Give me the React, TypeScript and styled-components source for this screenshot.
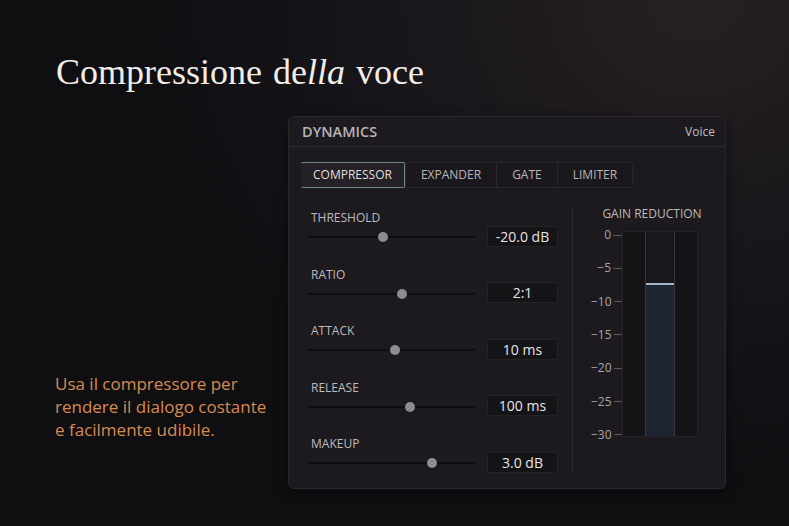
import styled, { createGlobalStyle } from "styled-components";

interface Control {
  label: string;
  value: string;
  position: number;
}

const controls: Control[] = [
  { label: "Threshold", value: "-20.0 dB", position: 0.45 },
  { label: "Ratio", value: "2:1", position: 0.56 },
  { label: "Attack", value: "10 ms", position: 0.52 },
  { label: "Release", value: "100 ms", position: 0.61 },
  { label: "Makeup", value: "3.0 dB", position: 0.74 },
];

const tabs = ["Compressor", "Expander", "Gate", "Limiter"];
const scale = ["0", "−5", "−10", "−15", "−20", "−25", "−30"];

// gain reduction currently shown on the meter, in dB
const reduction = 7;
const meterInner = 204;
const meterZeroOffset = 4;
const pxPerDb = 200 / 30;

export default function App() {
  const fillHeight = meterInner - (meterZeroOffset + reduction * pxPerDb);

  return (
    <>
      <GlobalStyle />
      <Page>
        <Title>
          Compressione de<em>lla</em> voce
        </Title>
        <Content>
          <Caption>
            Usa il compressore per
            <br />
            rendere il dialogo costante
            <br />e facilmente udibile.
          </Caption>

          <Panel>
            <Header>
              <PanelTitle>DYNAMICS</PanelTitle>
              <Preset>Voice</Preset>
            </Header>

            <Body>
              <Tabs>
                {tabs.map((tab, i) => (
                  <Tab key={tab} $active={i === 0}>
                    {tab}
                  </Tab>
                ))}
              </Tabs>

              <Controls>
                <LeftCol>
                  {controls.map((c) => (
                    <Row key={c.label}>
                      <Label>{c.label}</Label>
                      <SliderRow>
                        <Track>
                          <Thumb style={{ left: `${c.position * 100}%` }} />
                        </Track>
                        <ValueBox>{c.value}</ValueBox>
                      </SliderRow>
                    </Row>
                  ))}
                </LeftCol>

                <RightCol>
                  <GainLabel>Gain Reduction</GainLabel>
                  <MeterRow>
                    <Scale>
                      {scale.map((s) => (
                        <ScaleItem key={s}>
                          {s}
                          <Tick />
                        </ScaleItem>
                      ))}
                    </Scale>
                    <Meter>
                      <MeterSide />
                      <MeterMiddle>
                        <MeterFill style={{ height: fillHeight }} />
                      </MeterMiddle>
                      <MeterSide />
                    </Meter>
                  </MeterRow>
                </RightCol>
              </Controls>
            </Body>
          </Panel>
        </Content>
      </Page>
    </>
  );
}

const GlobalStyle = createGlobalStyle`
  body {
    margin: 0;
    background: #0f0e11;
  }
`;

const Page = styled.div`
  width: 789px;
  height: 526px;
  box-sizing: border-box;
  padding-top: 50px;
  overflow: hidden;
  background: radial-gradient(
    ellipse 70% 90% at 88% 0%,
    #252023 0%,
    #18161a 55%,
    #0f0e11 100%
  );
  font-family: "Open Sans", "Liberation Sans", sans-serif;
`;

const Title = styled.h1`
  margin: 0;
  padding-left: 56px;
  font-family: "Liberation Serif", serif;
  font-weight: 400;
  font-size: 36px;
  line-height: 44px;
  word-spacing: 2px;
  color: #f1ede8;

  em {
    font-style: italic;
  }
`;

const Content = styled.div`
  display: flex;
  margin-top: 22px;
`;

const Caption = styled.p`
  box-sizing: border-box;
  width: 288px;
  margin: 256px 0 0;
  padding-left: 55px;
  font-size: 17px;
  line-height: 23px;
  color: #d68b52;
`;

const Panel = styled.section`
  box-sizing: border-box;
  width: 438px;
  height: 373px;
  border: 1px solid #29272b;
  border-radius: 6px;
  background: #1c1a1e;
  box-shadow: 0 4px 14px rgba(0, 0, 0, 0.45);
`;

const Header = styled.header`
  display: flex;
  align-items: center;
  justify-content: space-between;
  height: 29px;
  padding: 0 10px 0 13px;
  border-bottom: 1px solid #2c2a2e;
`;

const PanelTitle = styled.h2`
  margin: 0;
  font-size: 14.5px;
  font-weight: 600;
  color: #b7b3b7;
`;

const Preset = styled.span`
  font-size: 12px;
  color: #c2bec2;
`;

const Body = styled.div`
  padding: 15px 12px 0;
`;

const Tabs = styled.div`
  display: inline-flex;
  height: 26px;
  box-sizing: border-box;
  border: 1px solid #29272b;
  border-radius: 3px;
  background: #1a181c;
`;

const Tab = styled.div<{ $active?: boolean }>`
  box-sizing: border-box;
  padding: 0 15px;
  font-size: 12px;
  line-height: 24px;
  text-transform: uppercase;
  color: ${(p) => (p.$active ? "#e2dede" : "#b9b5b9")};
  border-left: 1px solid #29272b;

  &:first-child {
    border-left: none;
  }

  ${(p) =>
    p.$active &&
    `
    margin: -1px 0 -1px -1px;
    padding: 0 12px;
    line-height: 24px;
    height: 26px;
    border: 1px solid #6b8a7c;
    border-radius: 2px;
    background: #232125;
  `}
`;

const Controls = styled.div`
  display: flex;
  margin-top: 20px;
  height: 264px;
`;

const LeftCol = styled.div`
  box-sizing: border-box;
  width: 272px;
  padding: 3px 0 0 7px;
  border-right: 1px solid #2c2a2e;
`;

const Row = styled.div`
  height: 56.5px;
`;

const Label = styled.div`
  padding-left: 3px;
  font-size: 12px;
  line-height: 14px;
  text-transform: uppercase;
  color: #bdb9bd;
`;

const SliderRow = styled.div`
  display: flex;
  align-items: center;
  height: 22px;
`;

const Track = styled.div`
  position: relative;
  width: 167px;
  height: 2px;
  margin: 2px 12px 0 0;
  background: #0e0d10;
`;

const Thumb = styled.span`
  position: absolute;
  top: 50%;
  width: 10px;
  height: 10px;
  border-radius: 50%;
  background: #8e8c90;
  transform: translate(-50%, -50%);
`;

const ValueBox = styled.div`
  box-sizing: border-box;
  width: 71px;
  height: 21px;
  border: 1px solid #242226;
  border-radius: 2px;
  background: #141315;
  font-size: 14px;
  line-height: 19px;
  text-align: center;
  color: #e8e4e8;
`;

const RightCol = styled.div`
  flex: 1;
  padding-left: 18px;
`;

const GainLabel = styled.div`
  font-size: 12px;
  line-height: 12px;
  text-align: center;
  text-transform: uppercase;
  color: #bdb9bd;
`;

const MeterRow = styled.div`
  display: flex;
  align-items: flex-start;
  margin-top: 8px;
`;

const Scale = styled.div`
  display: flex;
  flex-direction: column;
  justify-content: space-between;
  width: 31px;
  height: 214px;
`;

const ScaleItem = styled.div`
  display: flex;
  align-items: center;
  justify-content: flex-end;
  height: 14px;
  font-size: 12px;
  line-height: 14px;
  color: #a9a5a9;
`;

const Tick = styled.span`
  width: 9px;
  height: 1px;
  margin-left: 2px;
  background: #5a585c;
`;

const Meter = styled.div`
  display: flex;
  box-sizing: border-box;
  width: 76px;
  height: 206px;
  margin-top: 3px;
  border: 1px solid #232125;
  background: #141316;
`;

const MeterSide = styled.div`
  flex: 1;
`;

const MeterMiddle = styled.div`
  display: flex;
  flex-direction: column;
  justify-content: flex-end;
  width: 28px;
  border-left: 1px solid #38363a;
  border-right: 1px solid #38363a;
  background: #18171b;
`;

const MeterFill = styled.div`
  box-sizing: border-box;
  border-top: 2px solid #a6b4c5;
  background: #1e2532;
`;
